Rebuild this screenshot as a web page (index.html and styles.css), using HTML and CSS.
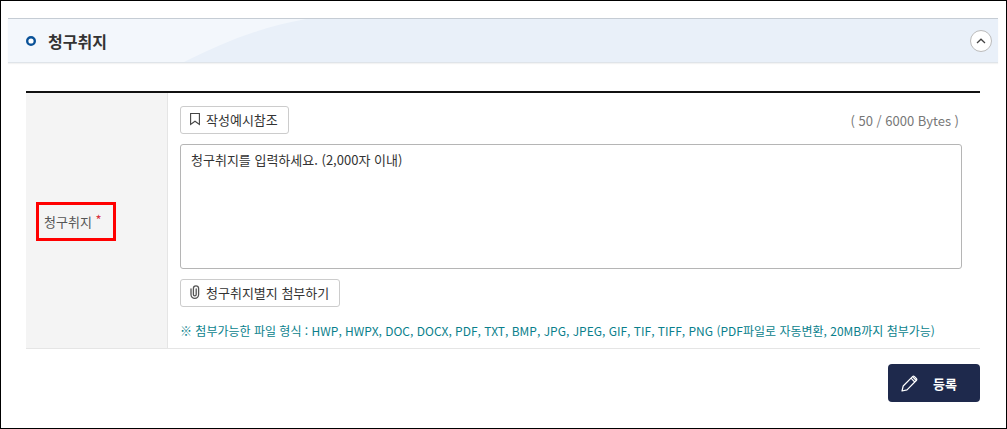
FILE: index.html
```html
<!DOCTYPE html>
<html lang="ko">
<head>
    <meta charset="UTF-8">
    <meta name="viewport" content="width=device-width, initial-scale=1.0">
    <title>청구취지</title>
    <link rel="stylesheet" href="styles.css">
</head>
<body>
<div class="page">
    <div class="section-head">
        <svg class="head-curve" viewBox="0 0 320 43" width="320" height="43" aria-hidden="true">
            <path d="M0 0H298C252 8 214 24 176 43H0Z" fill="#f3f7fc"/>
        </svg>
        <svg class="dot" width="10" height="10" viewBox="0 0 10 10" aria-hidden="true"><circle cx="5" cy="5" r="3.8" fill="#fff" stroke="#0a5298" stroke-width="2.4"/></svg>
        <h1>청구취지</h1>
        <button type="button" class="toggle-btn" aria-label="접기">
            <svg width="10" height="6" viewBox="0 0 10 6" fill="none" stroke="#444" stroke-width="1.3"><path d="M1 5L5 1.2L9 5"/></svg>
        </button>
    </div>

    <form class="content">
        <table class="form-table">
            <tr>
                <th scope="row">
                    <label class="field-label" for="claim">청구취지 <span class="required">*</span></label>
                </th>
                <td>
                    <div class="top-row">
                        <button type="button" class="btn">
                            <svg width="10" height="14" viewBox="0 0 10 14" fill="none" stroke="#444" stroke-width="1.1"><path d="M.6 1.5H9.4V12.5L5 9.3L.6 12.5Z"/></svg>
                            작성예시참조
                        </button>
                        <span class="bytes">( 50 / 6000 Bytes )</span>
                    </div>
                    <textarea id="claim">청구취지를 입력하세요. (2,000자 이내)</textarea>
                    <button type="button" class="btn">
                        <svg width="10" height="14" viewBox="0 0 10 14" fill="none" stroke="#555" stroke-width="1.3" stroke-linecap="round"><path d="M1 4V9.5A3.8 3.8 0 0 0 8.6 9.5V3.4A2.6 2.6 0 0 0 3.4 3.4V9.5A1.4 1.4 0 0 0 6.2 9.5V4"/></svg>
                        청구취지별지 첨부하기
                    </button>
                    <p class="note">※ 첨부가능한 파일 형식 : HWP, HWPX, DOC, DOCX, PDF, TXT, BMP, JPG, JPEG, GIF, TIF, TIFF, PNG (PDF파일로 자동변환, 20MB까지 첨부가능)</p>
                </td>
            </tr>
        </table>

        <div class="actions">
            <button type="submit" class="submit-btn">
                <svg width="17" height="17" viewBox="0 0 17 17" fill="none" stroke="#fff" stroke-width="1.2" stroke-linejoin="round"><path d="M1 16L2.2 11L11.5 1.7Q12.5 .7 13.5 1.7L15.3 3.5Q16.3 4.5 15.3 5.5L6 14.8Z"/><path d="M10 3.2L13.8 7M11.5 1.7L15.3 5.5"/></svg>
                등록
            </button>
        </div>
    </form>
</div>
</body>
</html>
```
FILE: styles.css
```css
* {
    box-sizing: border-box;
}

body {
    margin: 0;
    background: #fff;
    color: #333;
    font-family: "Noto Sans CJK KR", "Noto Sans", sans-serif;
    font-size: 13px;
}

button, textarea {
    font-family: inherit;
    font-size: 13px;
}

.page {
    min-height: 100vh;
    padding: 17px 8px 25px 7px;
    border: 1px solid #000;
}

.section-head {
    position: relative;
    display: flex;
    align-items: center;
    height: 45px;
    padding: 0 6px 0 18px;
    background: #e9f0f9;
    border-top: 1px solid #c5ccd4;
    border-bottom: 1px solid #dfe4e9;
    box-shadow: 0 1px 1px #f3f3f3;
}

/* lighter curved area behind the title */
.head-curve {
    position: absolute;
    top: 0;
    left: 0;
}

.dot {
    position: relative;
}

h1 {
    position: relative;
    flex: 1;
    margin: 0 0 0 12px;
    font-size: 16px;
    line-height: 24px;
    font-weight: bold;
    color: #333;
}

.toggle-btn {
    display: flex;
    align-items: center;
    justify-content: center;
    width: 22px;
    height: 22px;
    padding: 0;
    border: 1px solid #bbb;
    border-radius: 50%;
    background: #fff;
    cursor: pointer;
}

.content {
    margin: 28px 18px 0;
}

.form-table {
    width: 100%;
    border-collapse: separate;
    border-spacing: 0;
    border-top: 2px solid #111;
    border-bottom: 1px solid #e5e5e5;
}

.form-table th {
    width: 142px;
    padding: 2px 10px 0;
    background: #f4f4f4;
    border-right: 1px solid #e5e5e5;
    text-align: left;
    font-weight: normal;
}

.form-table td {
    padding: 13px 18px 7px 12px;
}

.field-label {
    display: block;
    width: 80px;
    padding: 6px 5px;
    border: 3px solid #f00;
    line-height: 21px;
    color: #555;
}

.required {
    font-size: 13px;
    line-height: 12px;
    vertical-align: 2px;
    color: #d9333f;
}

.top-row {
    display: flex;
    align-items: center;
    justify-content: space-between;
}

.btn {
    display: flex;
    align-items: center;
    gap: 6px;
    height: 28px;
    padding: 0 10px 2px 9px;
    border: 1px solid #ccc;
    border-radius: 3px;
    background: #fff;
    color: #333;
    cursor: pointer;
}

.bytes {
    padding-right: 3px;
    color: #777;
}

textarea {
    display: block;
    width: 100%;
    height: 125px;
    margin: 10px 0;
    padding: 5px 10px;
    border: 1px solid #b5b5b5;
    border-radius: 3px;
    line-height: 20px;
    color: #333;
    resize: none;
}

.note {
    margin: 14px 0 0;
    font-size: 12px;
    line-height: 20px;
    color: #0a7f8c;
}

.actions {
    display: flex;
    justify-content: flex-end;
    margin-top: 15px;
}

.submit-btn {
    display: flex;
    align-items: center;
    gap: 15px;
    height: 38px;
    padding: 0 23px 0 13px;
    border: none;
    border-radius: 4px;
    background: #1e294c;
    color: #fff;
    font-weight: bold;
    cursor: pointer;
}
```
